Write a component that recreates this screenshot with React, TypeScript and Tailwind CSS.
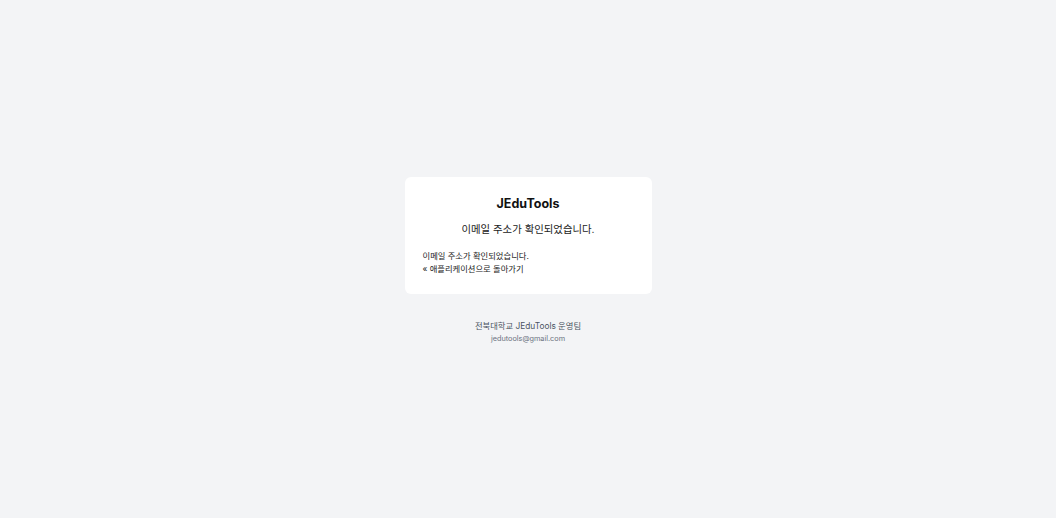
export default function App() {
  return (
    <div className="min-h-screen w-full bg-[#f3f4f6] flex flex-col items-center justify-center" style={{ fontFamily: 'Inter, "Noto Sans CJK KR", sans-serif' }}>
      <div className="w-[247px] bg-white rounded-md px-[18px] pt-[17px] pb-[18px] mt-[2px]">
        <h1 className="text-center text-[12.5px] font-bold text-[#111] leading-[20px]">JEduTools</h1>
        <p className="text-center text-[10.4px] text-[#222] mt-[8px] leading-[16px]">이메일 주소가 확인되었습니다.</p>
        <div className="mt-[12px] text-[8.3px] text-[#222] leading-[13px]">
          <p>이메일 주소가 확인되었습니다.</p>
          <p>« 애플리케이션으로 돌아가기</p>
        </div>
      </div>
      <div className="mt-[26px] text-center">
        <p className="text-[8.3px] text-[#4b5563] leading-[13px]">전북대학교 JEduTools 운영팀</p>
        <p className="text-[7.3px] text-[#6b7280] leading-[11px] mt-[0px]">jedutools@gmail.com</p>
      </div>
    </div>
  );
}
